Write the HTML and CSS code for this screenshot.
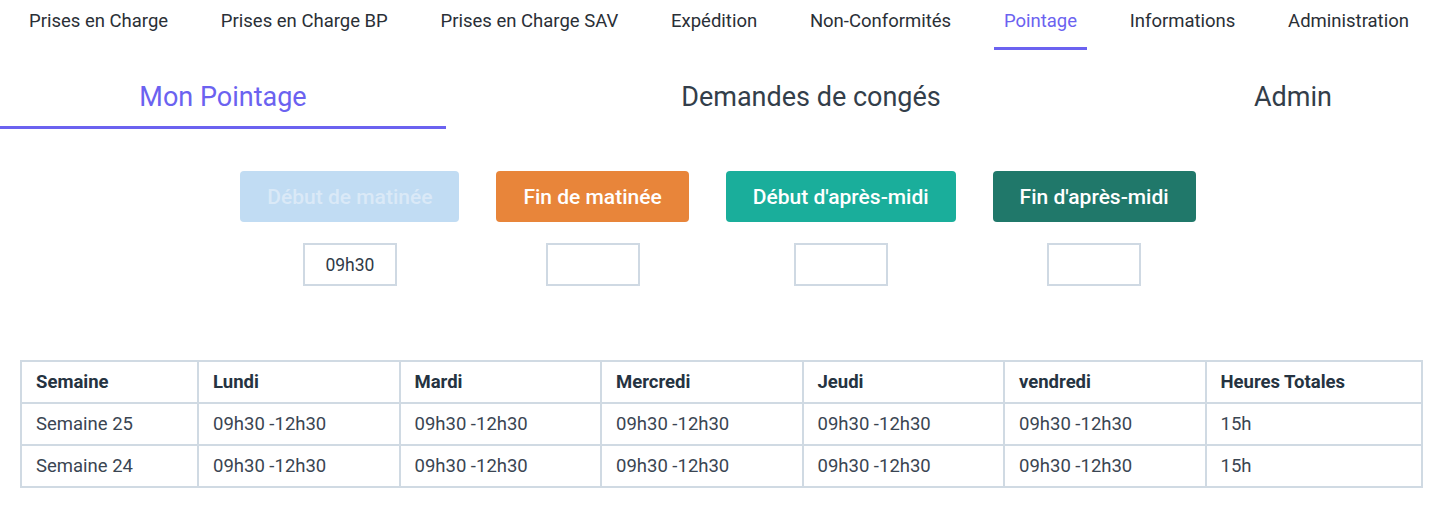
FILE: index.html
```html
<!DOCTYPE html>
<html lang="fr">
<head>
<meta charset="utf-8">
<title>Pointage</title>
<link rel="stylesheet" href="styles.css">
</head>
<body>
<nav class="topnav">
  <a class="navitem">Prises en Charge</a>
  <a class="navitem">Prises en Charge BP</a>
  <a class="navitem">Prises en Charge SAV</a>
  <a class="navitem">Expédition</a>
  <a class="navitem">Non-Conformités</a>
  <a class="navitem active">Pointage</a>
  <a class="navitem">Informations</a>
  <a class="navitem">Administration</a>
</nav>
<div class="subtabs">
  <div class="subtab active">Mon Pointage</div>
  <div class="subtab">Demandes de congés</div>
  <div class="subtab">Admin</div>
</div>
<section class="punch">
  <div class="punchcol">
    <button class="btn btn-disabled">Début de matinée</button>
    <div class="timebox">09h30</div>
  </div>
  <div class="punchcol">
    <button class="btn btn-orange">Fin de matinée</button>
    <div class="timebox"></div>
  </div>
  <div class="punchcol">
    <button class="btn btn-teal">Début d'après-midi</button>
    <div class="timebox"></div>
  </div>
  <div class="punchcol">
    <button class="btn btn-green">Fin d'après-midi</button>
    <div class="timebox"></div>
  </div>
</section>
<table class="weeks">
  <colgroup>
    <col class="c-week"><col class="c-day"><col class="c-day"><col class="c-day"><col class="c-day"><col class="c-day"><col class="c-total">
  </colgroup>
  <thead>
    <tr><th>Semaine</th><th>Lundi</th><th>Mardi</th><th>Mercredi</th><th>Jeudi</th><th>vendredi</th><th>Heures Totales</th></tr>
  </thead>
  <tbody>
    <tr><td>Semaine 25</td><td>09h30 -12h30</td><td>09h30 -12h30</td><td>09h30 -12h30</td><td>09h30 -12h30</td><td>09h30 -12h30</td><td>15h</td></tr>
    <tr><td>Semaine 24</td><td>09h30 -12h30</td><td>09h30 -12h30</td><td>09h30 -12h30</td><td>09h30 -12h30</td><td>09h30 -12h30</td><td>15h</td></tr>
  </tbody>
</table>
</body>
</html>
```
FILE: styles.css
```css
* { box-sizing: border-box; }
body {
  margin: 0;
  background: #ffffff;
  font-family: Roboto, "Liberation Sans", sans-serif;
  color: #2e3742;
}
.topnav {
  display: flex;
  justify-content: space-between;
  padding: 0 17px 0 19px;
  height: 50px;
}
.navitem {
  display: block;
  padding: 10px 10px 0;
  height: 50px;
  font-size: 18.5px;
  line-height: 22px;
  color: #2a2f36;
  border-bottom: 3px solid transparent;
}
.navitem.active {
  color: #6b62f0;
  border-bottom-color: #6b62f0;
}
.subtabs {
  display: grid;
  grid-template-columns: 446px 730px 234px;
}
.subtab {
  text-align: center;
  font-size: 27px;
  line-height: 30px;
  padding: 32px 0 14px;
  color: #333e4a;
  border-bottom: 3px solid transparent;
}
.subtab.active {
  color: #6b62f0;
  border-bottom-color: #6b62f0;
}
.punch {
  display: flex;
  justify-content: center;
  gap: 37px;
  margin-top: 42px;
}
.punchcol {
  display: flex;
  flex-direction: column;
  align-items: center;
  gap: 21px;
}
.btn {
  height: 51px;
  padding: 0 27px;
  border: none;
  border-radius: 4px;
  font-family: Roboto, "Liberation Sans", sans-serif;
  font-size: 21px;
  font-weight: 500;
  color: #ffffff;
}
.btn-disabled { background: #c1dcf3; color: #dae9f7; }
.btn-orange { background: #e8853a; }
.btn-teal { background: #1aae9b; }
.btn-green { background: #20786a; }
.timebox {
  width: 94px;
  height: 43px;
  border: 2px solid #cfd9e3;
  display: flex;
  align-items: center;
  justify-content: center;
  font-size: 17.5px;
  color: #2f3a47;
}
.weeks {
  margin: 74px 0 0 20px;
  width: 1402px;
  border-collapse: collapse;
  table-layout: fixed;
  font-size: 18.5px;
}
.c-week { width: 177px; }
.c-day { width: 201.5px; }
.c-total { width: 216px; }
.weeks th, .weeks td {
  border: 2px solid #d0dae3;
  height: 42px;
  padding: 0 14px;
  text-align: left;
}
.weeks th {
  font-weight: 700;
  color: #253341;
}
.weeks td {
  color: #3a4552;
}
```
